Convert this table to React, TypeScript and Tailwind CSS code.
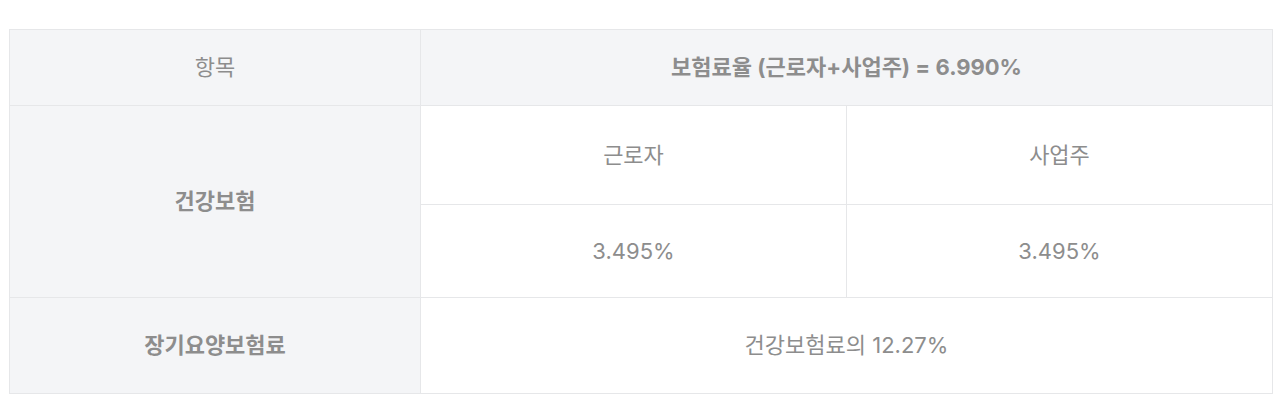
import React from 'react';

const font = { fontFamily: '"Inter", "Noto Sans CJK KR", sans-serif' };

export default function App() {
  return (
    <div className="w-[1280px] h-[411px] bg-white pt-[29px] pl-[9px]" style={font}>
      <div className="grid w-[1264px] grid-cols-[410px_425px_425px] grid-rows-[75px_98px_92px_95px] gap-px p-px bg-[#e6e7e9] text-[22px] text-[#8d8d8d]">
        {/* header */}
        <div className="flex items-center justify-center bg-[#f4f5f7]">항목</div>
        <div className="col-span-2 flex items-center justify-center bg-[#f4f5f7] font-bold">
          보험료율 (근로자+사업주) = 6.990%
        </div>

        {/* 건강보험 */}
        <div className="row-span-2 flex items-center justify-center bg-[#f4f5f7] font-bold">
          건강보험
        </div>
        <div className="flex items-center justify-center bg-white">근로자</div>
        <div className="flex items-center justify-center bg-white">사업주</div>
        <div className="flex items-center justify-center bg-white">3.495%</div>
        <div className="flex items-center justify-center bg-white">3.495%</div>

        {/* 장기요양보험료 */}
        <div className="flex items-center justify-center bg-[#f4f5f7] font-bold">장기요양보험료</div>
        <div className="col-span-2 flex items-center justify-center bg-white">건강보험료의 12.27%</div>
      </div>
    </div>
  );
}
